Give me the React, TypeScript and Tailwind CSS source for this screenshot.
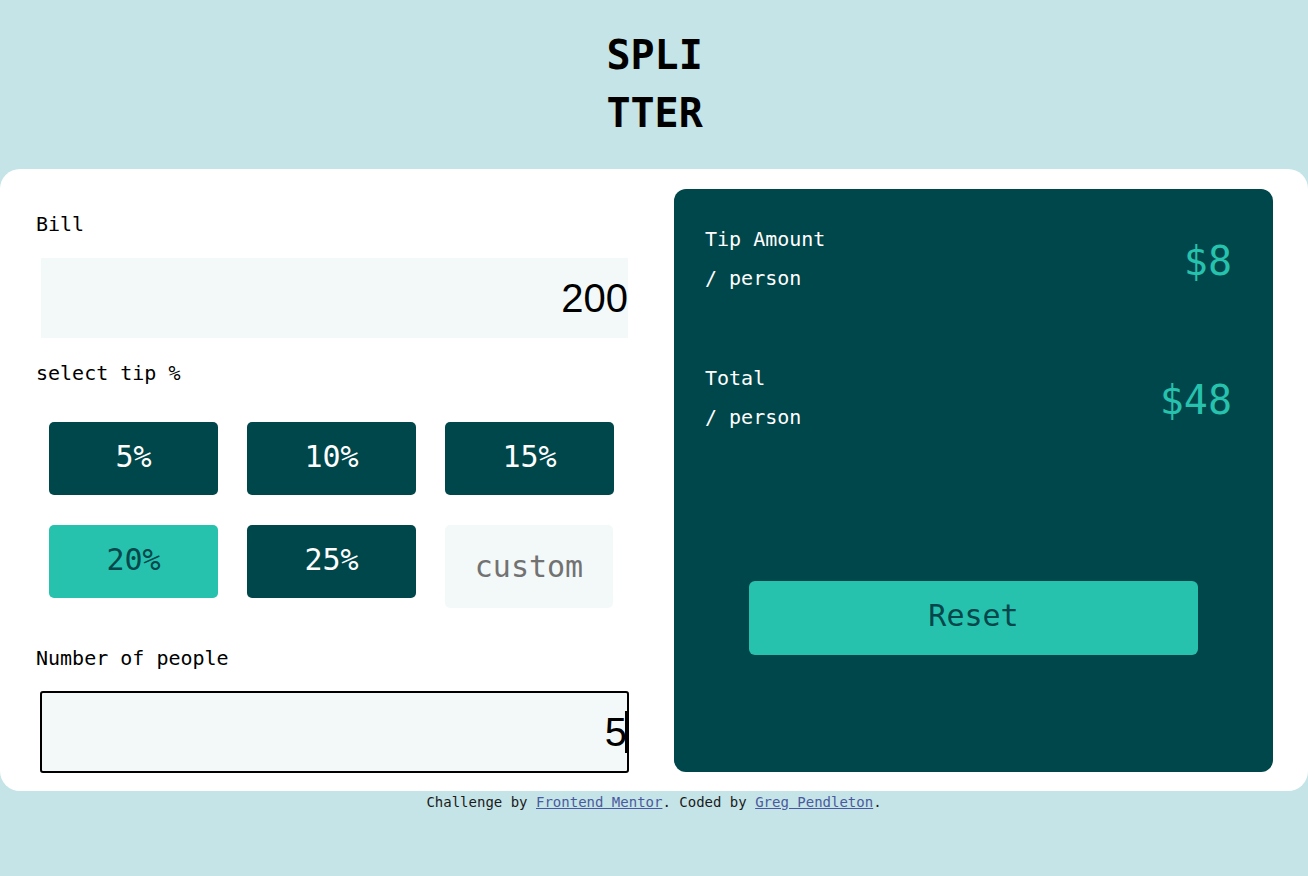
import { useState } from "react";

const TIPS = [5, 10, 15, 20, 25];

const mono = "font-['DejaVu_Sans_Mono','Liberation_Mono',monospace]";

function TipButton({
  value,
  active,
  onClick,
}: {
  value: number;
  active: boolean;
  onClick: () => void;
}) {
  return (
    <button
      type="button"
      onClick={onClick}
      className={`h-[73px] rounded-[5px] pb-[3px] text-[30px] leading-none ${
        active ? "bg-[#26c2ae] text-[#00474b]" : "bg-[#00474b] text-white"
      }`}
    >
      {value}%
    </button>
  );
}

function ResultRow({ label, amount }: { label: string; amount: string }) {
  return (
    <div className="flex items-center justify-between">
      <div className="text-[20px] leading-[39px] text-white">
        <div>{label}</div>
        <div>/ person</div>
      </div>
      <div className="pt-1 text-[40px] leading-none text-[#26c2ae]">{amount}</div>
    </div>
  );
}

export default function App() {
  const [bill, setBill] = useState("200");
  const [people, setPeople] = useState("5");
  const [tip, setTip] = useState(20);

  const b = parseFloat(bill) || 0;
  const p = parseInt(people) || 0;
  const tipPer = p ? (b * tip) / 100 / p : 0;
  const totalPer = p ? b / p + tipPer : 0;
  const fmt = (n: number) => `$${Math.round(n * 100) / 100}`;

  return (
    <div className={`min-h-[876px] bg-[#c5e4e7] ${mono} text-black`}>
      <h1 className="mx-auto w-[4.2ch] translate-x-[3px] break-all pt-[26px] pb-[27px] text-[40px] font-bold leading-[58px]">
        SPLITTER
      </h1>

      <main className="flex rounded-[20px] bg-white">
        <section className="w-[674px] shrink-0 pl-9 pt-[41px]">
          <label className="block text-[20px] leading-7">Bill</label>
          <input
            value={bill}
            onChange={(e) => setBill(e.target.value)}
            className="mt-5 ml-[5px] block h-[80px] w-[587px] bg-[#f3f9f9] pr-0 text-right font-['Liberation_Sans',Arial,sans-serif] text-[40px] outline-none"
          />

          <p className="mt-[21px] text-[20px] leading-7">select tip %</p>
          <div className="mt-[35px] ml-[13px] grid w-[565px] grid-cols-3 items-start gap-x-[29px] gap-y-[30px]">
            {TIPS.map((t) => (
              <TipButton
                key={t}
                value={t}
                active={tip === t}
                onClick={() => setTip(t)}
              />
            ))}
            <input
              placeholder="custom"
              className="h-[83px] w-[168px] rounded-[5px] bg-[#f3f9f9] text-center text-[30px] text-[#727272] outline-none placeholder:text-[#727272]"
            />
          </div>

          <label className="mt-9 block text-[20px] leading-7">
            Number of people
          </label>
          <div className="relative mt-[19px] ml-1 w-[589px]">
            <input
              value={people}
              onChange={(e) => setPeople(e.target.value)}
              className="block h-[82px] w-full rounded-[3px] border-2 border-black bg-[#f3f9f9] pr-0 text-right font-['Liberation_Sans',Arial,sans-serif] text-[40px] outline-none"
            />
            <span className="absolute top-[20px] right-[2px] h-[42px] w-[2px] bg-black" />
          </div>
          <div className="h-[18px]" />
        </section>

        <section className="mt-5 mb-[19px] mr-[35px] flex flex-1 flex-col rounded-xl bg-[#00474b] pt-[31px] pr-[41px] pl-[31px]">
          <ResultRow label="Tip Amount" amount={fmt(tipPer)} />
          <div className="mt-[61px]">
            <ResultRow label="Total" amount={fmt(totalPer)} />
          </div>
          <button
            type="button"
            onClick={() => {
              setBill("");
              setPeople("");
              setTip(0);
            }}
            className="mt-[144px] ml-[44px] h-[74px] w-[449px] rounded-md bg-[#26c2ae] pb-[5px] text-[30px] text-[#00474b]"
          >
            Reset
          </button>
        </section>
      </main>

      <footer className="mt-px text-center text-[14px] leading-5 text-[#1b1b1b]">
        Challenge by{" "}
        <a href="#" className="text-[#4a5a9e] underline">
          Frontend Mentor
        </a>
        . Coded by{" "}
        <a href="#" className="text-[#4a5a9e] underline">
          Greg Pendleton
        </a>
        .
      </footer>
    </div>
  );
}
